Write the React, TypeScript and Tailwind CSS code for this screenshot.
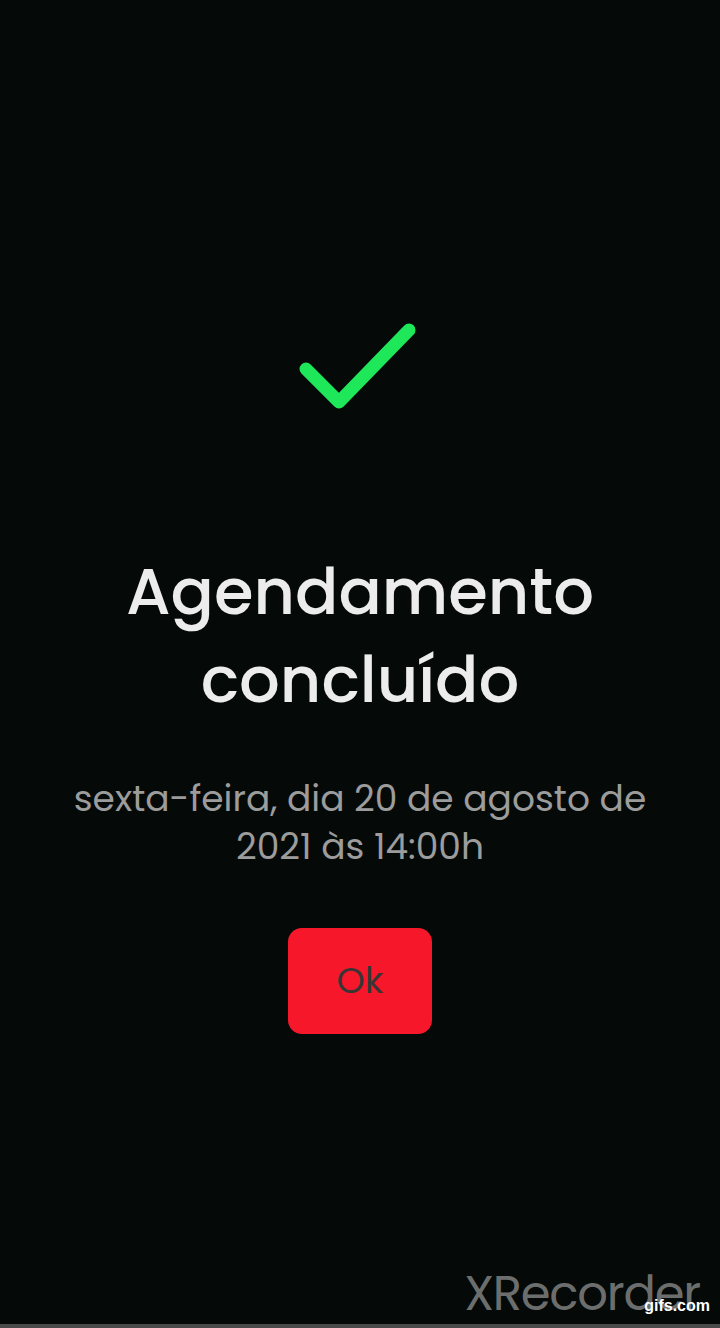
export default function App() {
  return (
    <div className="relative flex h-[1328px] w-[720px] flex-col items-center overflow-hidden bg-[#050a08] font-['Poppins','Inter','Open_Sans',sans-serif]">
      <svg className="mt-[318px] h-[100px] w-[130px]" viewBox="0 0 130 100" fill="none">
        <path
          d="M11 51 L44 84 L114 12"
          stroke="#1ee85a"
          strokeWidth={13}
          strokeLinecap="round"
          strokeLinejoin="round"
        />
      </svg>

      <h1 className="mt-[130px] text-center text-[64px] font-medium leading-[88px] text-[#ececec]">
        Agendamento
        <br />
        concluído
      </h1>

      <p className="mt-[51px] text-center text-[36px] leading-[48px] text-[#9c9c9c]">
        sexta-feira, dia 20 de agosto de
        <br />
        2021 às 14:00h
      </p>

      <button
        type="button"
        className="mt-[57px] flex h-[106px] w-[144px] items-center justify-center rounded-[14px] bg-[#f6172a] text-[36px] text-[#3a3535]"
      >
        Ok
      </button>

      <div className="absolute bottom-[-2px] right-[20px] text-[48px] font-normal tracking-tight text-[#8a8a8a]/80">
        XRecorder
      </div>
      <div className="absolute bottom-[10px] right-[10px] font-['Liberation_Sans',sans-serif] text-[16px] font-bold text-white">
        gifs.com
      </div>
      <div className="absolute bottom-0 left-0 h-[4px] w-full bg-[#4a4a4a]" />
    </div>
  );
}
